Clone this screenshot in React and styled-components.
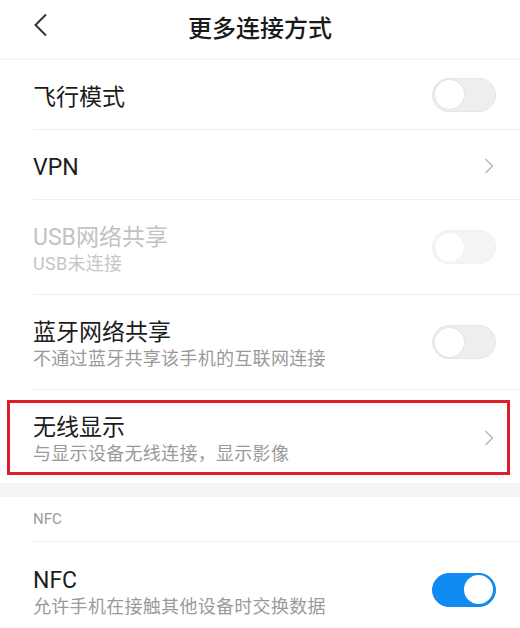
import React from 'react'
import styled, { createGlobalStyle } from 'styled-components'

const Global = createGlobalStyle`
  html, body { margin: 0; padding: 0; background: #fff; }
  body { font-family: Roboto, "Noto Sans CJK SC", sans-serif; }
`

function Chevron({ left }) {
  return left ? (
    <svg width="16" height="24" viewBox="0 0 16 24">
      <path d="M13 1.5 L2.5 12 L13 22.5" fill="none" stroke="#333" strokeWidth="2" />
    </svg>
  ) : (
    <svg width="10" height="16" viewBox="0 0 10 16">
      <path d="M1.5 1 L8.5 8 L1.5 15" fill="none" stroke="#b8b8b8" strokeWidth="1.4" />
    </svg>
  )
}

function Item({ title, sub, control, disabled, on, height, marked }) {
  return (
    <Row $h={height}>
      <Texts>
        <Title $disabled={disabled}>{title}</Title>
        {sub && <Sub $disabled={disabled}>{sub}</Sub>}
      </Texts>
      {control === 'switch' ? (
        <Switch $on={on} $disabled={disabled}><Knob $on={on} /></Switch>
      ) : (
        <Arrow><Chevron /></Arrow>
      )}
      {marked && <Mark />}
    </Row>
  )
}

export default function App() {
  return (
    <Page>
      <Global />
      <Header>
        <Back><Chevron left /></Back>
        <HeaderTitle>更多连接方式</HeaderTitle>
      </Header>
      <List>
        <Item title="飞行模式" control="switch" height={70} />
        <Item title="VPN" control="arrow" height={70} />
        <Item title="USB网络共享" sub="USB未连接" control="switch" disabled height={95} />
        <Item title="蓝牙网络共享" sub="不通过蓝牙共享该手机的互联网连接" control="switch" height={95} />
        <Item title="无线显示" sub="与显示设备无线连接，显示影像" control="arrow" height={93} marked />
      </List>
      <Gap />
      <Section>NFC</Section>
      <List>
        <Item title="NFC" sub="允许手机在接触其他设备时交换数据" control="switch" on height={95} />
      </List>
    </Page>
  )
}

const Page = styled.div`
  width: 520px;
  height: 628px;
  overflow: hidden;
  background: #fff;
`

const Header = styled.div`
  position: relative;
  height: 58px;
  display: flex;
  align-items: center;
  justify-content: center;
  border-bottom: 2px solid #f6f6f6;
`

const Back = styled.div`
  position: absolute;
  left: 33px;
  top: 13px;
  display: flex;
`

const HeaderTitle = styled.div`
  font-size: 24px;
  font-weight: 500;
  color: #1a1a1a;
  margin-top: -6px;
`

const List = styled.div`
  display: flex;
  flex-direction: column;
`

const Row = styled.div`
  position: relative;
  height: ${p => p.$h}px;
  margin-left: 33px;
  padding-right: 24px;
  display: flex;
  align-items: center;
  justify-content: space-between;
  border-bottom: 1px solid #efefef;
  box-sizing: border-box;
  &:last-child { border-bottom: none; }
`

const Texts = styled.div`
  display: flex;
  flex-direction: column;
  padding-top: 5px;
`

const Title = styled.div`
  font-size: 23px;
  line-height: 29px;
  color: ${p => (p.$disabled ? '#c2c2c2' : '#1c1c1c')};
`

const Sub = styled.div`
  font-size: 18px;
  line-height: 24px;
  letter-spacing: 0.3px;
  color: ${p => (p.$disabled ? '#c6c6c6' : '#9a9a9a')};
`

const Switch = styled.div`
  width: 64px;
  height: 34px;
  border-radius: 17px;
  box-sizing: border-box;
  background: ${p => (p.$on ? '#0f8bf2' : '#eeeeee')};
  border: 1px solid ${p => (p.$on ? '#0f8bf2' : '#e6e6e6')};
  opacity: ${p => (p.$disabled ? 0.55 : 1)};
  display: flex;
  align-items: center;
  justify-content: ${p => (p.$on ? 'flex-end' : 'flex-start')};
  padding: 0 2px;
`

const Knob = styled.div`
  width: 29px;
  height: 29px;
  border-radius: 50%;
  background: #fff;
  box-shadow: ${p => (p.$on ? 'none' : '0 0 2px rgba(0,0,0,0.12)')};
`

const Arrow = styled.div`
  display: flex;
  margin-right: 2px;
  margin-top: 2px;
`

const Mark = styled.div`
  position: absolute;
  left: -26px;
  right: 10px;
  top: 10px;
  bottom: 8px;
  border: 3px solid #dd1f2d;
  pointer-events: none;
`

const Gap = styled.div`
  height: 14px;
  background: #f5f5f5;
`

const Section = styled.div`
  height: 45px;
  margin-left: 33px;
  display: flex;
  align-items: center;
  font-size: 15px;
  color: #999;
  border-bottom: 1px solid #efefef;
  box-sizing: border-box;
`
